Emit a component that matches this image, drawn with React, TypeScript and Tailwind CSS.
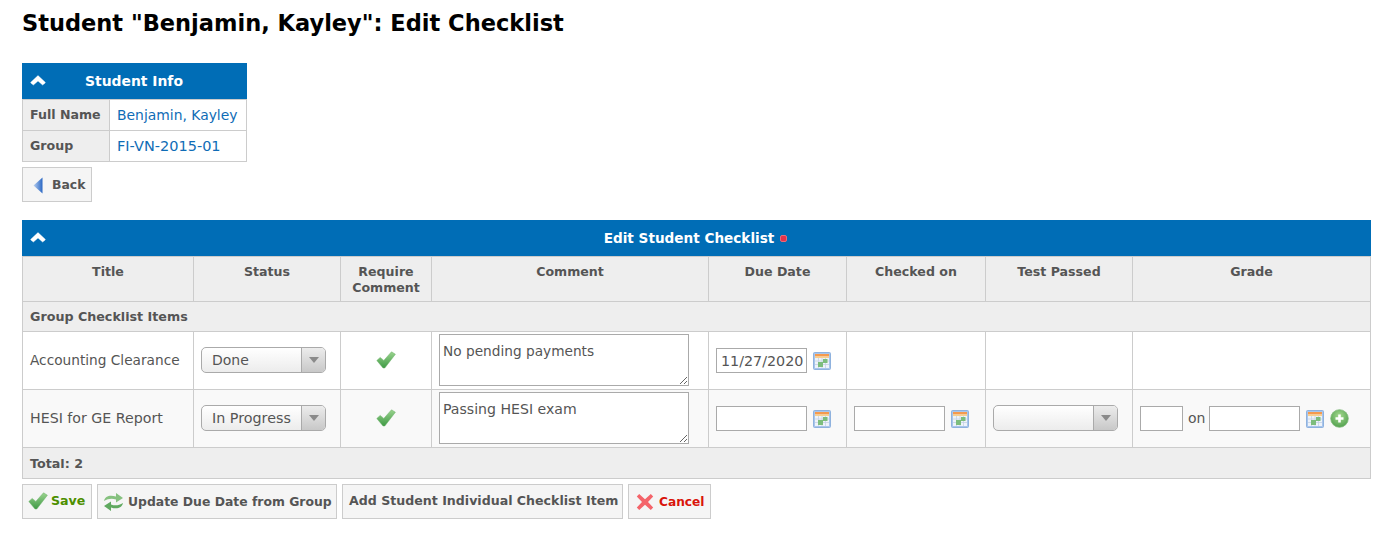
import React from "react";

const Chevron = () => (
  <svg width="16" height="11" viewBox="0 0 16 11" className="block">
    <path d="M0.8 7.2 L8 0.6 L15.2 7.2 L15.2 8 L12.6 10 L8 6 L3.4 10 L0.8 8 Z" fill="#fff" stroke="#fff" strokeWidth="0.4" strokeLinejoin="round" />
  </svg>
);

const Check = ({ w = 20, h = 18, id }: { w?: number; h?: number; id: string }) => (
  <svg width={w} height={h} viewBox="0 0 20 18" className="block shrink-0">
    <defs>
      <linearGradient id={id} x1="0" y1="0" x2="0" y2="1">
        <stop offset="0" stopColor="#9ad38e" />
        <stop offset="1" stopColor="#3f9a45" />
      </linearGradient>
    </defs>
    <path d="M0.8 9.5 L4.2 6.4 L7.8 9.4 L15.5 0.8 L19.4 3.2 L8.8 17 L7 17 Z" fill={`url(#${id})`} stroke="#6cb26a" strokeWidth="0.5" strokeLinejoin="round" />
  </svg>
);

const Calendar = () => (
  <svg width="18" height="18" viewBox="0 0 18 18" className="block shrink-0">
    <rect x="0.5" y="0.5" width="17" height="17" rx="1" fill="#a9c6ec" stroke="#8fb2de" />
    <rect x="2" y="2" width="14" height="14" fill="#eef3f9" />
    <rect x="2" y="2" width="14" height="2.5" fill="#f59a4e" />
    <rect x="2" y="4.5" width="14" height="1.5" fill="#f8d08e" />
    <path d="M2 9h14M2 12.5h14M5.5 6v10M9 6v10M12.5 6v10" stroke="#c4d2e4" strokeWidth="0.8" />
    <rect x="5" y="10" width="5" height="5" fill="#7dbd7d" />
    <rect x="10" y="7" width="4.5" height="4" fill="#7dbd7d" />
  </svg>
);

const Plus = () => (
  <svg width="19" height="19" viewBox="0 0 19 19" className="block shrink-0">
    <defs>
      <radialGradient id="plusg" cx="0.5" cy="0.35" r="0.7">
        <stop offset="0" stopColor="#a5d98f" />
        <stop offset="1" stopColor="#4c9d4a" />
      </radialGradient>
    </defs>
    <circle cx="9.5" cy="9.5" r="8.8" fill="url(#plusg)" stroke="#7db777" strokeWidth="0.8" />
    <path d="M9.5 5.5v8M5.5 9.5h8" stroke="#fff" strokeWidth="2.6" />
  </svg>
);

const BackArrow = () => (
  <svg width="10" height="17" viewBox="0 0 10 17" className="block shrink-0">
    <defs>
      <linearGradient id="backg" x1="0" y1="0" x2="1" y2="0">
        <stop offset="0" stopColor="#b7cff0" />
        <stop offset="1" stopColor="#2a67c4" />
      </linearGradient>
    </defs>
    <path d="M9.5 0.5 V16.5 L0.5 8.5 Z" fill="url(#backg)" />
  </svg>
);

const Refresh = () => (
  <svg width="21" height="20" viewBox="0 0 21 20" className="block shrink-0">
    <path d="M1 9 C2 4 7 2.5 13 4.5 V1 L20 6 L13 10.5 V7.5 C9 6 5 6.5 1 9 Z" fill="#86c17f" />
    <path d="M20 11 C19 16 14 17.5 8 15.5 V19 L1 14 L8 9.5 V12.5 C12 14 16 13.5 20 11 Z" fill="#5fa95f" />
  </svg>
);

const Cross = () => (
  <svg width="18" height="18" viewBox="0 0 18 18" className="block shrink-0">
    <path d="M3.2 1 L9 6.2 L14.8 1 L17.2 3.5 L12 9 L17.2 14.5 L14.8 17 L9 11.8 L3.2 17 L0.8 14.5 L6 9 L0.8 3.5 Z" fill="#f4646a" />
  </svg>
);

const Select = ({ label, w, text }: { label?: string; w: string; text?: string }) => (
  <div className={`${w} h-[26px] mb-[2px] flex rounded-[5px] border border-[#aaaaaa] bg-gradient-to-b from-white to-[#ececec] overflow-hidden`}>
    <div className={`flex-1 pl-[10px] leading-[24px] text-[#555555] ${text ?? ""}`}>{label}</div>
    <div className="w-[24px] border-l border-[#aaaaaa] bg-gradient-to-b from-[#ececec] to-[#c8c8c8] flex items-center justify-center">
      <div className="w-0 h-0 border-l-[5px] border-r-[5px] border-t-[6px] border-l-transparent border-r-transparent border-t-[#8a8a8a]" />
    </div>
  </div>
);

const Input = ({ w, value }: { w: string; value?: string }) => (
  <input
    readOnly
    value={value ?? ""}
    className={`${w} h-[25px] border border-[#aaaaaa] bg-white pl-[4px] pr-0 text-[14.3px] text-[#555555] outline-none`}
  />
);

const Comment = ({ value, text }: { value: string; text: string }) => (
  <textarea
    readOnly
    value={value}
    className={`block w-[250px] h-[52px] mb-[1px] border border-[#aaaaaa] bg-white px-[3px] py-[6px] ${text} leading-[20px] text-[#555555] outline-none resize-y`}
  />
);

const Btn = ({ className, children }: { className?: string; children: React.ReactNode }) => (
  <div className={`h-[35px] border border-[#cccccc] bg-[#f5f5f5] flex items-center font-bold ${className ?? ""}`}>
    {children}
  </div>
);

const th = "border border-[#cccccc] bg-[#eeeeee] font-bold text-center align-top pt-[7px] leading-[16px] text-[#555555]";
const td = "border border-[#cccccc] px-[7px] align-middle";

export default function App() {
  return (
    <div className="min-h-[540px] bg-white px-[22px] pt-[9px] text-[14px] text-[#555555] font-['DejaVu_Sans','Liberation_Sans',sans-serif]">
      <h1 className="text-[22.5px] leading-[28px] font-bold text-black">Student "Benjamin, Kayley": Edit Checklist</h1>

      <div className="mt-[26px] w-[225px]">
        <div className="h-[36px] bg-[#006db6] text-white font-bold text-[13.9px] flex items-center relative justify-center pr-[1px]">
          <span className="absolute left-[8px] top-[12px]"><Chevron /></span>
          Student Info
        </div>
        <table className="w-[224px] table-fixed border-collapse">
          <colgroup>
            <col className="w-[87px]" />
            <col className="w-[137px]" />
          </colgroup>
          <tbody>
            <tr className="h-[31px]">
              <td className="border border-[#cccccc] bg-[#eeeeee] pl-[7px] font-bold text-[12.6px]">Full Name</td>
              <td className="border border-[#cccccc] pl-[7px] text-[13.9px] text-[#0f6cb6] whitespace-nowrap">Benjamin, Kayley</td>
            </tr>
            <tr className="h-[31px]">
              <td className="border border-[#cccccc] bg-[#eeeeee] pl-[7px] pt-[1px] font-bold text-[12.6px]">Group</td>
              <td className="border border-[#cccccc] pl-[7px] pt-[1px] text-[14.5px] text-[#0f6cb6]">FI-VN-2015-01</td>
            </tr>
          </tbody>
        </table>
      </div>

      <Btn className="mt-[5px] w-[70px] pl-[10px] gap-[9px] pt-[2px] text-[12.4px]">
        <BackArrow />
        Back
      </Btn>

      <div className="mt-[18px] w-[1349px]">
        <div className="h-[36px] bg-[#006db6] text-white font-bold text-[13.6px] flex items-center justify-center gap-[6px] relative pr-[2px] pt-[1px]">
          <span className="absolute left-[8px] top-[12px]"><Chevron /></span>
          Edit Student Checklist
          <span className="w-[7px] h-[7px] rounded-[2px] bg-[#e5324a] border border-[#e86a7a]" />
        </div>
        <table className="w-[1348px] table-fixed border-collapse">
          <colgroup>
            <col className="w-[171px]" />
            <col className="w-[147px]" />
            <col className="w-[91px]" />
            <col className="w-[277px]" />
            <col className="w-[138px]" />
            <col className="w-[139px]" />
            <col className="w-[147px]" />
            <col className="w-[238px]" />
          </colgroup>
          <tbody>
            <tr className="h-[45px] text-[12.6px]">
              <td className={th}>Title</td>
              <td className={th}>Status</td>
              <td className={th}>Require Comment</td>
              <td className={th}>Comment</td>
              <td className={th}>Due Date</td>
              <td className={th}>Checked on</td>
              <td className={th}>Test Passed</td>
              <td className={th}>Grade</td>
            </tr>
            <tr className="h-[30px]">
              <td colSpan={8} className="border border-[#cccccc] bg-[#eeeeee] pl-[7px] font-bold text-[12.7px]">Group Checklist Items</td>
            </tr>
            <tr className="h-[58px]">
              <td className={`${td} whitespace-nowrap text-[13.7px]`}>Accounting Clearance</td>
              <td className={td}><Select label="Done" w="w-[125px]" /></td>
              <td className={td}><div className="flex justify-center mb-[2px]"><Check id="c1" /></div></td>
              <td className={td}><Comment value="No pending payments" text="text-[13.7px]" /></td>
              <td className={td}>
                <div className="flex items-center gap-[6px]"><Input w="w-[91px]" value="11/27/2020" /><Calendar /></div>
              </td>
              <td className={td} />
              <td className={td} />
              <td className={td} />
            </tr>
            <tr className="h-[58px] bg-[#f9f9f9]">
              <td className={`${td} whitespace-nowrap text-[14.2px]`}>HESI for GE Report</td>
              <td className={td}><Select label="In Progress" w="w-[125px]" text="text-[14.3px]" /></td>
              <td className={td}><div className="flex justify-center mb-[2px]"><Check id="c2" /></div></td>
              <td className={td}><Comment value="Passing HESI exam" text="text-[14.1px]" /></td>
              <td className={td}>
                <div className="flex items-center gap-[6px]"><Input w="w-[91px]" /><Calendar /></div>
              </td>
              <td className={td}>
                <div className="flex items-center gap-[6px]"><Input w="w-[91px]" /><Calendar /></div>
              </td>
              <td className={td}><Select w="w-[125px]" /></td>
              <td className={td}>
                <div className="flex items-center">
                  <Input w="w-[43px]" />
                  <span className="ml-[5px] mr-[4px]">on</span>
                  <Input w="w-[91px]" />
                  <span className="ml-[6px]"><Calendar /></span>
                  <span className="ml-[6px]"><Plus /></span>
                </div>
              </td>
            </tr>
            <tr className="h-[31px]">
              <td colSpan={8} className="border border-[#cccccc] bg-[#eeeeee] pl-[7px] pt-[2px] font-bold text-[12.7px]">Total: 2</td>
            </tr>
          </tbody>
        </table>
      </div>

      <div className="mt-[5px] flex gap-[5px] whitespace-nowrap">
        <Btn className="w-[70px] pl-[5px] gap-[3px] pb-[1px] text-[12.6px] text-[#4d8f00]">
          <Check id="c3" />
          Save
        </Btn>
        <Btn className="w-[240px] pl-[5px] gap-[4px] text-[12.4px] pt-[1px]">
          <Refresh />
          Update Due Date from Group
        </Btn>
        <Btn className="w-[281px] pl-[6px] text-[12.6px]">Add Student Individual Checklist Item</Btn>
        <Btn className="w-[83px] pl-[7px] gap-[5px] text-[12.2px] text-[#d9140a] pt-[1px]">
          <Cross />
          Cancel
        </Btn>
      </div>
    </div>
  );
}
